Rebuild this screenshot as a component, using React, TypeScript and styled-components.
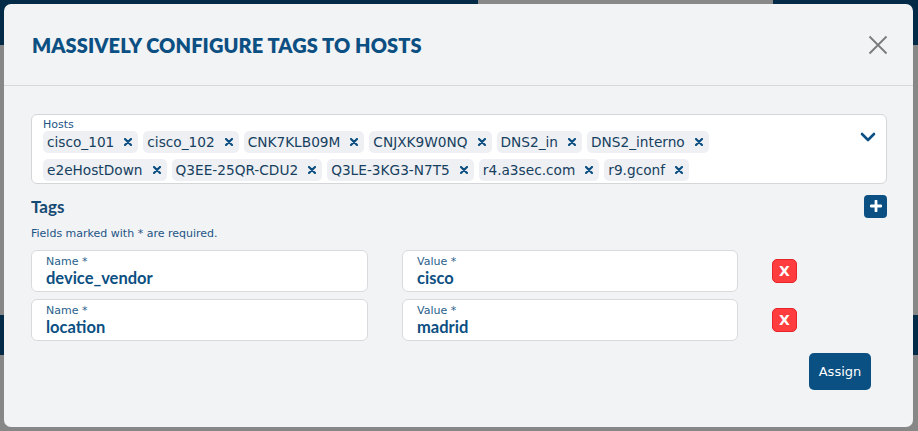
import styled, { createGlobalStyle } from 'styled-components';

const GlobalStyle = createGlobalStyle`
  html, body {
    margin: 0;
    padding: 0;
    width: 918px;
    height: 431px;
    overflow: hidden;
    background: #878787;
    font-family: Lato, 'Liberation Sans', sans-serif;
  }
`;

const hosts = [
  'cisco_101',
  'cisco_102',
  'CNK7KLB09M',
  'CNJXK9W0NQ',
  'DNS2_in',
  'DNS2_interno',
  'e2eHostDown',
  'Q3EE-25QR-CDU2',
  'Q3LE-3KG3-N7T5',
  'r4.a3sec.com',
  'r9.gconf',
];

const tags = [
  { name: 'device_vendor', value: 'cisco' },
  { name: 'location', value: 'madrid' },
];

const sans = `'DejaVu Sans', 'Open Sans', sans-serif`;

const Backdrop = styled.div`
  position: relative;
  width: 918px;
  height: 431px;
  overflow: hidden;
`;

const TopBar = styled.div`
  height: 45px;
  background: #032a47;
  display: flex;
  align-items: flex-start;
  padding-left: 478px;
`;

const DimSearch = styled.div`
  width: 295px;
  height: 4px;
  background: #888;
`;

const Band = styled.div<{ $top: number; $h: number }>`
  margin-top: ${(p) => p.$top}px;
  height: ${(p) => p.$h}px;
  background: #032a47;
`;

const Modal = styled.div`
  position: absolute;
  top: 4px;
  left: 4px;
  width: 909px;
  height: 423px;
  background: #f2f3f5;
  border-radius: 7px;
  display: flex;
  flex-direction: column;
`;

const Header = styled.div`
  height: 82px;
  box-sizing: border-box;
  border-bottom: 1px solid #d6d8db;
  display: flex;
  align-items: center;
  justify-content: space-between;
  padding: 0 24px 0 28px;
`;

const Title = styled.h1`
  margin: 0;
  font-size: 20px;
  font-weight: 800;
  color: #0c4f82;
  letter-spacing: 0.1px;
`;

const CloseBtn = styled.button`
  border: none;
  background: none;
  padding: 0;
  width: 22px;
  height: 22px;
  display: flex;
  align-items: center;
  justify-content: center;
  cursor: pointer;
`;

const Body = styled.div`
  padding: 28px 26px 0 27px;
  display: flex;
  flex-direction: column;
`;

const HostsBox = styled.div`
  background: #fff;
  border: 1px solid #d4d6d9;
  border-radius: 6px;
  padding: 3px 10px 2px 11px;
  display: flex;
  align-items: flex-start;
`;

const HostsInner = styled.div`
  flex: 1;
`;

const SmallLabel = styled.div`
  font-family: ${sans};
  font-size: 11px;
  line-height: 13px;
  color: #1d5585;
`;

const ChipList = styled.div`
  display: flex;
  flex-wrap: wrap;
  gap: 6px 5px;
  width: 700px;
`;

const Chip = styled.div`
  height: 22px;
  display: flex;
  align-items: center;
  gap: 10px;
  padding: 0 6px 0 4px;
  background: #eef0f3;
  border-radius: 5px;
  font-family: ${sans};
  font-size: 13.7px;
  color: #17405f;
`;

const Chevron = styled.div`
  margin-top: 14px;
  display: flex;
`;

const TagsHead = styled.div`
  margin-top: 10px;
  display: flex;
  align-items: center;
  justify-content: space-between;
  height: 24px;
`;

const TagsTitle = styled.h2`
  margin: 0;
  font-size: 17px;
  font-weight: 700;
  color: #164a73;
`;

const PlusBtn = styled.button`
  width: 23px;
  height: 23px;
  border: none;
  border-radius: 4px;
  background: #0c4f82;
  padding: 0;
  display: flex;
  align-items: center;
  justify-content: center;
`;

const Hint = styled.div`
  margin-top: 9px;
  font-family: ${sans};
  font-size: 11px;
  line-height: 14px;
  color: #1d5585;
`;

const Rows = styled.div`
  margin-top: 9px;
  display: flex;
  flex-direction: column;
  gap: 7px;
`;

const TagRow = styled.div`
  display: grid;
  grid-template-columns: 337px 336px 25px;
  column-gap: 34px;
  align-items: center;
`;

const Field = styled.div`
  height: 42px;
  box-sizing: border-box;
  background: #fff;
  border: 1px solid #d8dadd;
  border-radius: 6px;
  padding: 4px 14px 0;
`;

const FieldLabel = styled.div`
  font-family: ${sans};
  font-size: 11px;
  line-height: 13px;
  color: #2a5f8c;
`;

const FieldValue = styled.div`
  font-size: 16.5px;
  line-height: 20px;
  font-weight: 700;
  color: #0c4f82;
`;

const RemoveBtn = styled.button`
  width: 25px;
  height: 24px;
  box-sizing: border-box;
  border: 1px solid #e8232b;
  border-radius: 5px;
  background: #ff3d3f;
  color: #fff;
  font-family: ${sans};
  font-size: 14px;
  font-weight: 700;
  padding: 0;
  display: flex;
  align-items: center;
  justify-content: center;
`;

const Footer = styled.div`
  margin-top: 12px;
  display: flex;
  justify-content: flex-end;
  padding-right: 16px;
`;

const AssignBtn = styled.button`
  width: 62px;
  height: 37px;
  border: none;
  border-radius: 5px;
  background: #0b5082;
  color: #fff;
  font-family: ${sans};
  font-size: 13px;
  padding: 0;
`;

const ChipX = () => (
  <svg width="8" height="8" viewBox="0 0 8 8">
    <path d="M1 1 7 7M7 1 1 7" stroke="#0c4f82" strokeWidth="2.2" strokeLinecap="round" />
  </svg>
);

export default function App() {
  return (
    <>
      <GlobalStyle />
      <Backdrop>
        <TopBar>
          <DimSearch />
        </TopBar>
        <Band $top={270} $h={40} />
        <Modal>
          <Header>
            <Title>MASSIVELY CONFIGURE TAGS TO HOSTS</Title>
            <CloseBtn>
              <svg width="20" height="20" viewBox="0 0 20 20">
                <path d="M1.5 1.5 18.5 18.5M18.5 1.5 1.5 18.5" stroke="#7a7a7a" strokeWidth="1.8" />
              </svg>
            </CloseBtn>
          </Header>
          <Body>
            <HostsBox>
              <HostsInner>
                <SmallLabel>Hosts</SmallLabel>
                <ChipList>
                  {hosts.map((h) => (
                    <Chip key={h}>
                      {h}
                      <ChipX />
                    </Chip>
                  ))}
                </ChipList>
              </HostsInner>
              <Chevron>
                <svg width="16" height="10" viewBox="0 0 16 10">
                  <path d="M2 2 8 8 14 2" fill="none" stroke="#0c4f82" strokeWidth="2.6" strokeLinecap="round" strokeLinejoin="round" />
                </svg>
              </Chevron>
            </HostsBox>
            <TagsHead>
              <TagsTitle>Tags</TagsTitle>
              <PlusBtn>
                <svg width="12" height="12" viewBox="0 0 12 12">
                  <path d="M6 1v10M1 6h10" stroke="#fff" strokeWidth="2.8" strokeLinecap="round" />
                </svg>
              </PlusBtn>
            </TagsHead>
            <Hint>Fields marked with * are required.</Hint>
            <Rows>
              {tags.map((t) => (
                <TagRow key={t.name}>
                  <Field>
                    <FieldLabel>Name *</FieldLabel>
                    <FieldValue>{t.name}</FieldValue>
                  </Field>
                  <Field>
                    <FieldLabel>Value *</FieldLabel>
                    <FieldValue>{t.value}</FieldValue>
                  </Field>
                  <RemoveBtn>X</RemoveBtn>
                </TagRow>
              ))}
            </Rows>
            <Footer>
              <AssignBtn>Assign</AssignBtn>
            </Footer>
          </Body>
        </Modal>
      </Backdrop>
    </>
  );
}
